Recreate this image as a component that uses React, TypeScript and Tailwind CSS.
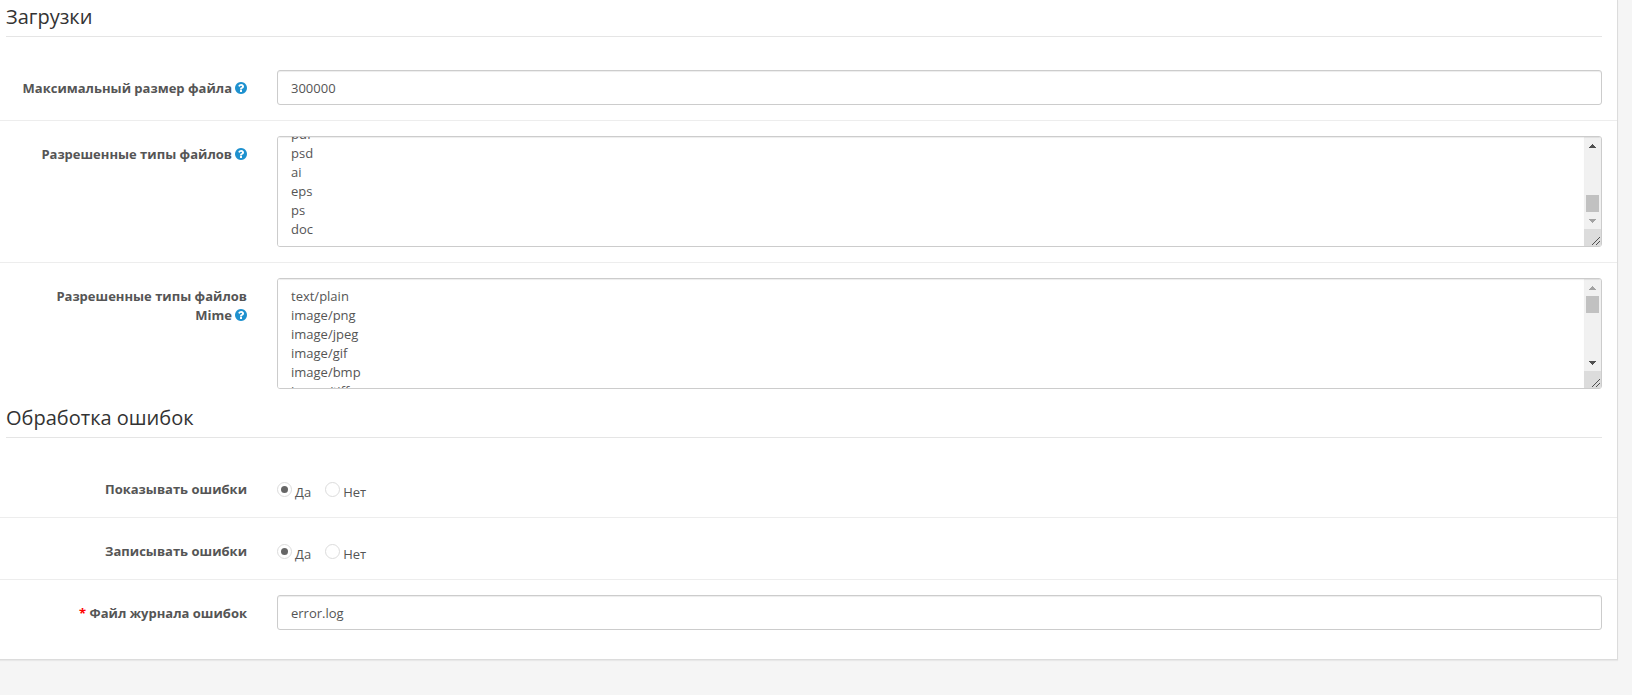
import { useEffect, useRef } from "react";
import type { ReactNode } from "react";

const fileExtensions = [
    "zip", "txt", "png", "jpe", "jpeg", "jpg", "gif", "bmp", "ico", "tiff", "tif", "svg", "svgz",
    "rar", "msi", "cab", "mp3", "qt", "mov", "pdf", "psd", "ai", "eps", "ps", "doc",
];

const mimeTypes = [
    "text/plain", "image/png", "image/jpeg", "image/gif", "image/bmp", "image/tiff", "image/svg+xml",
    "application/zip", "application/x-zip", "application/x-zip-compressed", "application/rar",
    "application/x-rar", "application/x-rar-compressed", "application/octet-stream", "audio/mpeg",
    "video/quicktime", "application/pdf",
];

function HelpIcon() {
    return (
        <svg viewBox="128 128 1536 1536" className="ml-[3px] inline-block size-3 align-[-1px] text-[#1e91cf]" fill="currentColor">
            <path d="M1024 1376v-192q0-14-9-23t-23-9h-192q-14 0-23 9t-9 23v192q0 14 9 23t23 9h192q14 0 23-9t9-23zm256-672q0-88-55.5-163t-138.5-116-170-41q-243 0-371 213-15 24 8 42l132 100q7 6 19 6 16 0 25-12 53-68 86-92 34-24 86-24 48 0 85.5 26t37.5 59q0 38-20 61t-68 45q-63 28-115.5 86.5t-52.5 125.5v36q0 14 9 23t23 9h192q14 0 23-9t9-23q0-19 21.5-49.5t54.5-49.5q32-18 49-28.5t46-35 44.5-48 28-60.5 12.5-81zm384 192q0 209-103 385.5t-279.5 279.5-385.5 103-385.5-103-279.5-279.5-103-385.5 103-385.5 279.5-279.5 385.5-103 385.5 103 279.5 279.5 103 385.5z" />
        </svg>
    );
}

function Arrow({ down, dim }: { down?: boolean; dim?: boolean }) {
    return (
        <span className={`flex h-[17px] items-center justify-center ${dim ? "text-[#a3a3a3]" : "text-[#505050]"}`}>
            <svg viewBox="0 0 7 4" className={`h-1 w-[7px] ${down ? "rotate-180" : ""}`} fill="currentColor" shapeRendering="crispEdges">
                <path d="M3 0h1v1h1v1h1v1h1v1H0V3h1V2h1V1h1z" />
            </svg>
        </span>
    );
}

/* Label column + field column */
function Row({ label, htmlFor, help, required, first, children }: {
    label: string;
    htmlFor?: string;
    help?: boolean;
    required?: boolean;
    first?: boolean;
    children: ReactNode;
}) {
    // the help icon never wraps away from the last word
    const words = label.split(" ");
    const lastWord = words.pop();
    const content = (
        <>
            {required && <span className="text-[#ff0000]">* </span>}
            {words.join(" ")}{" "}
            <span className="whitespace-nowrap">
                {lastWord}
                {help && <HelpIcon />}
            </span>
        </>
    );
    const labelClass = "block w-[262px] shrink-0 pt-[9px] pr-[15px] pl-1.5 text-right font-bold";

    return (
        <div className={`flex py-[15px] ${first ? "" : "border-t border-[#ededed]"}`}>
            {htmlFor ? (
                <label htmlFor={htmlFor} className={labelClass}>{content}</label>
            ) : (
                <span className={labelClass}>{content}</span>
            )}
            <div className="min-w-0 flex-1 px-[15px]">{children}</div>
        </div>
    );
}

function TextInput({ id, value }: { id: string; value: string }) {
    return (
        <input
            id={id}
            type="text"
            defaultValue={value}
            className="block h-[35px] w-full rounded-[3px] border border-[#cccccc] bg-white px-[13px] py-2 shadow-[inset_0_1px_1px_rgba(0,0,0,0.075)] outline-none focus:border-[#66afe9]"
        />
    );
}

function ListArea({ id, lines, atEnd }: { id: string; lines: string[]; atEnd?: boolean }) {
    const ref = useRef<HTMLTextAreaElement>(null);

    useEffect(() => {
        if (atEnd && ref.current) ref.current.scrollTop = ref.current.scrollHeight;
    }, [atEnd]);

    return (
        <div className="flex h-[111px] overflow-hidden rounded-[3px] border border-[#cccccc]">
            <textarea
                id={id}
                ref={ref}
                defaultValue={lines.join("\n")}
                className="block h-full min-w-0 flex-1 resize-none bg-white px-[13px] pt-2 pb-[7px] shadow-[inset_0_1px_1px_rgba(0,0,0,0.075)] outline-none [scrollbar-width:none]"
            />
            <div aria-hidden="true" className="flex w-[17px] flex-col bg-[#f1f1f1] shadow-[inset_0_1px_1px_rgba(0,0,0,0.075)]">
                <Arrow dim={!atEnd} />
                <div className={`flex flex-1 flex-col px-0.5 ${atEnd ? "justify-end" : "justify-start"}`}>
                    <div className="h-[17px] bg-[#c1c1c1]" />
                </div>
                <Arrow down dim={atEnd} />
                <div className="flex h-[17px] items-end justify-end bg-[#dcdcdc] p-px">
                    <svg viewBox="0 0 8 8" className="size-2" fill="none" stroke="#505050">
                        <path d="M0 8L8 0M4 8L8 4" />
                    </svg>
                </div>
            </div>
        </div>
    );
}

function YesNo({ name, label }: { name: string; label: string }) {
    return (
        <div role="radiogroup" aria-label={label} className="flex gap-[14px] pt-[11px]">
            {["Да", "Нет"].map((text, i) => (
                <label key={text} className="flex gap-[3px]">
                    <input
                        type="radio"
                        name={name}
                        value={1 - i}
                        defaultChecked={i === 0}
                        className="grid size-[15px] appearance-none place-items-center rounded-full border border-[#dcdcdc] bg-white before:size-[7px] before:rounded-full checked:before:bg-[#666666]"
                    />
                    <span className="pt-px">{text}</span>
                </label>
            ))}
        </div>
    );
}

function Legend({ children }: { children: ReactNode }) {
    return (
        <div className="mr-[15px] mb-[18px] ml-1.5 border-b border-[#e5e5e5] pb-[5px]">
            <h2 className="text-[20px] leading-[28px] text-[#333333]">{children}</h2>
        </div>
    );
}

export default function App() {
    return (
        <div className="min-h-screen bg-[#f5f5f5] pr-[14px] font-['Open_Sans','Noto_Sans',sans-serif] text-[13px] leading-[19px] text-[#555555]">
            <form className="border-r border-b border-[#dcdcdc] bg-white pt-[3px] pb-[14px] shadow-[0_1px_1px_rgba(0,0,0,0.05)]">
                <section>
                    <Legend>Загрузки</Legend>
                    <Row first label="Максимальный размер файла" htmlFor="file-max-size" help>
                        <TextInput id="file-max-size" value="300000" />
                    </Row>
                    <Row label="Разрешенные типы файлов" htmlFor="file-ext-allowed" help>
                        <ListArea id="file-ext-allowed" lines={fileExtensions} atEnd />
                    </Row>
                    <Row label="Разрешенные типы файлов Mime" htmlFor="file-mime-allowed" help>
                        <ListArea id="file-mime-allowed" lines={mimeTypes} />
                    </Row>
                </section>

                <section>
                    <Legend>Обработка ошибок</Legend>
                    <Row first label="Показывать ошибки">
                        <YesNo name="error-display" label="Показывать ошибки" />
                    </Row>
                    <Row label="Записывать ошибки">
                        <YesNo name="error-log" label="Записывать ошибки" />
                    </Row>
                    <Row label="Файл журнала ошибок" htmlFor="error-filename" required>
                        <TextInput id="error-filename" value="error.log" />
                    </Row>
                </section>
            </form>
        </div>
    );
}
